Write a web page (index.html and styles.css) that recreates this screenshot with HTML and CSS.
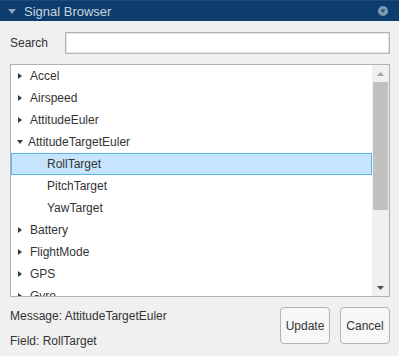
FILE: index.html
```html
<!DOCTYPE html>
<html>
<head>
<meta charset="utf-8">
<link rel="stylesheet" href="styles.css">
</head>
<body>
<div class="panel">
  <div class="titlebar">
    <svg class="tb-caret" width="8" height="5" viewBox="0 0 8 5"><polygon points="0,0 8,0 4,5" fill="#8ea6bf"/></svg>
    <span class="tb-title">Signal Browser</span>
    <svg class="tb-menu" width="10" height="10" viewBox="0 0 10 10"><circle cx="5" cy="5" r="5" fill="#7f98b2"/><polygon points="2.6,3.6 7.4,3.6 5,6.8" fill="#1f4a75"/></svg>
  </div>
  <div class="body">
    <div class="search-row">
      <label class="search-label">Search</label>
      <div class="search-input"></div>
    </div>
    <div class="list">
      <div class="rows">
        <div class="row"><span class="tri-r"></span><span>Accel</span></div>
        <div class="row"><span class="tri-r"></span><span>Airspeed</span></div>
        <div class="row"><span class="tri-r"></span><span>AttitudeEuler</span></div>
        <div class="row"><span class="tri-d"></span><span>AttitudeTargetEuler</span></div>
        <div class="row child selected"><span>RollTarget</span></div>
        <div class="row child"><span>PitchTarget</span></div>
        <div class="row child"><span>YawTarget</span></div>
        <div class="row"><span class="tri-r"></span><span>Battery</span></div>
        <div class="row"><span class="tri-r"></span><span>FlightMode</span></div>
        <div class="row"><span class="tri-r"></span><span>GPS</span></div>
        <div class="row"><span class="tri-r"></span><span>Gyro</span></div>
      </div>
      <div class="scrollbar">
        <div class="sb-btn"><svg width="7" height="4" viewBox="0 0 7 4"><polygon points="0,4 7,4 3.5,0" fill="#a3a3a3"/></svg></div>
        <div class="sb-track"><div class="sb-thumb"></div></div>
        <div class="sb-btn"><svg width="7" height="4" viewBox="0 0 7 4"><polygon points="0,0 7,0 3.5,4" fill="#505050"/></svg></div>
      </div>
    </div>
    <div class="footer">
      <div class="info">
        <div class="info-line">Message: AttitudeTargetEuler</div>
        <div class="info-line">Field: RollTarget</div>
      </div>
      <div class="buttons">
        <button class="btn">Update</button>
        <button class="btn">Cancel</button>
      </div>
    </div>
  </div>
</div>
</body>
</html>
```

FILE: styles.css
```css
html, body {
  margin: 0;
  padding: 0;
}
body {
  width: 399px;
  height: 356px;
  background: #f0f0f0;
  font-family: "Liberation Sans", Arial, sans-serif;
  font-size: 12px;
  color: #333333;
  overflow: hidden;
}
.panel {
  width: 399px;
  height: 356px;
  display: flex;
  flex-direction: column;
}
.titlebar {
  height: 21px;
  background: #0c3d6e;
  border-top: 1px solid #1e4c7a;
  box-sizing: border-box;
  display: flex;
  align-items: center;
  padding: 0 11px 0 8px;
}
.tb-caret {
  margin-right: 8px;
}
.tb-title {
  font-size: 13px;
  color: #c9d4df;
  flex: 1;
}
.body {
  padding: 0 9px 0 10px;
  display: flex;
  flex-direction: column;
}
.search-row {
  margin-top: 11px;
  height: 22px;
  display: flex;
  align-items: center;
}
.search-label {
  width: 55px;
  color: #333;
}
.search-input {
  flex: 1;
  height: 22px;
  box-sizing: border-box;
  background: #ffffff;
  border: 1px solid #b5b5b5;
  box-shadow: inset 0 0 0 1px #e4e4e4;
}
.list {
  margin-top: 10px;
  height: 233px;
  box-sizing: border-box;
  border: 1px solid #b0b0b0;
  background: #ffffff;
  display: flex;
  overflow: hidden;
}
.rows {
  flex: 1;
  display: flex;
  flex-direction: column;
}
.row {
  flex: 0 0 22px;
  height: 22px;
  box-sizing: border-box;
  display: flex;
  align-items: center;
  padding-left: 7px;
  color: #333;
}
.row.child {
  padding-left: 36px;
}
.row.selected {
  background: #c6e5fc;
  border: 1px solid #5cb5ef;
  padding-left: 35px;
}
.tri-r {
  width: 0;
  height: 0;
  border-top: 3.5px solid transparent;
  border-bottom: 3.5px solid transparent;
  border-left: 4px solid #3a3a3a;
  margin-right: 8px;
}
.tri-d {
  width: 0;
  height: 0;
  border-left: 3.5px solid transparent;
  border-right: 3.5px solid transparent;
  border-top: 4px solid #3a3a3a;
  margin-right: 5px;
  margin-left: -1px;
}
.scrollbar {
  width: 17px;
  background: #f0f0f0;
  display: flex;
  flex-direction: column;
}
.sb-btn {
  height: 17px;
  display: flex;
  align-items: center;
  justify-content: center;
}
.sb-track {
  flex: 1;
  padding: 0 1px;
}
.sb-thumb {
  height: 128px;
  background: #c1c1c1;
}
.footer {
  display: flex;
  justify-content: space-between;
  margin-top: 10px;
}
.info {
  display: flex;
  flex-direction: column;
  gap: 11px;
  padding-top: 2px;
}
.info-line {
  height: 14px;
  line-height: 14px;
  color: #333;
}
.buttons {
  display: flex;
  gap: 10px;
}
.btn {
  width: 50px;
  height: 37px;
  box-sizing: border-box;
  border: 1px solid #b4b4b4;
  border-radius: 4px;
  background: #f7f7f7;
  font-family: "Liberation Sans", Arial, sans-serif;
  font-size: 12px;
  color: #333;
  padding: 0;
}
```
